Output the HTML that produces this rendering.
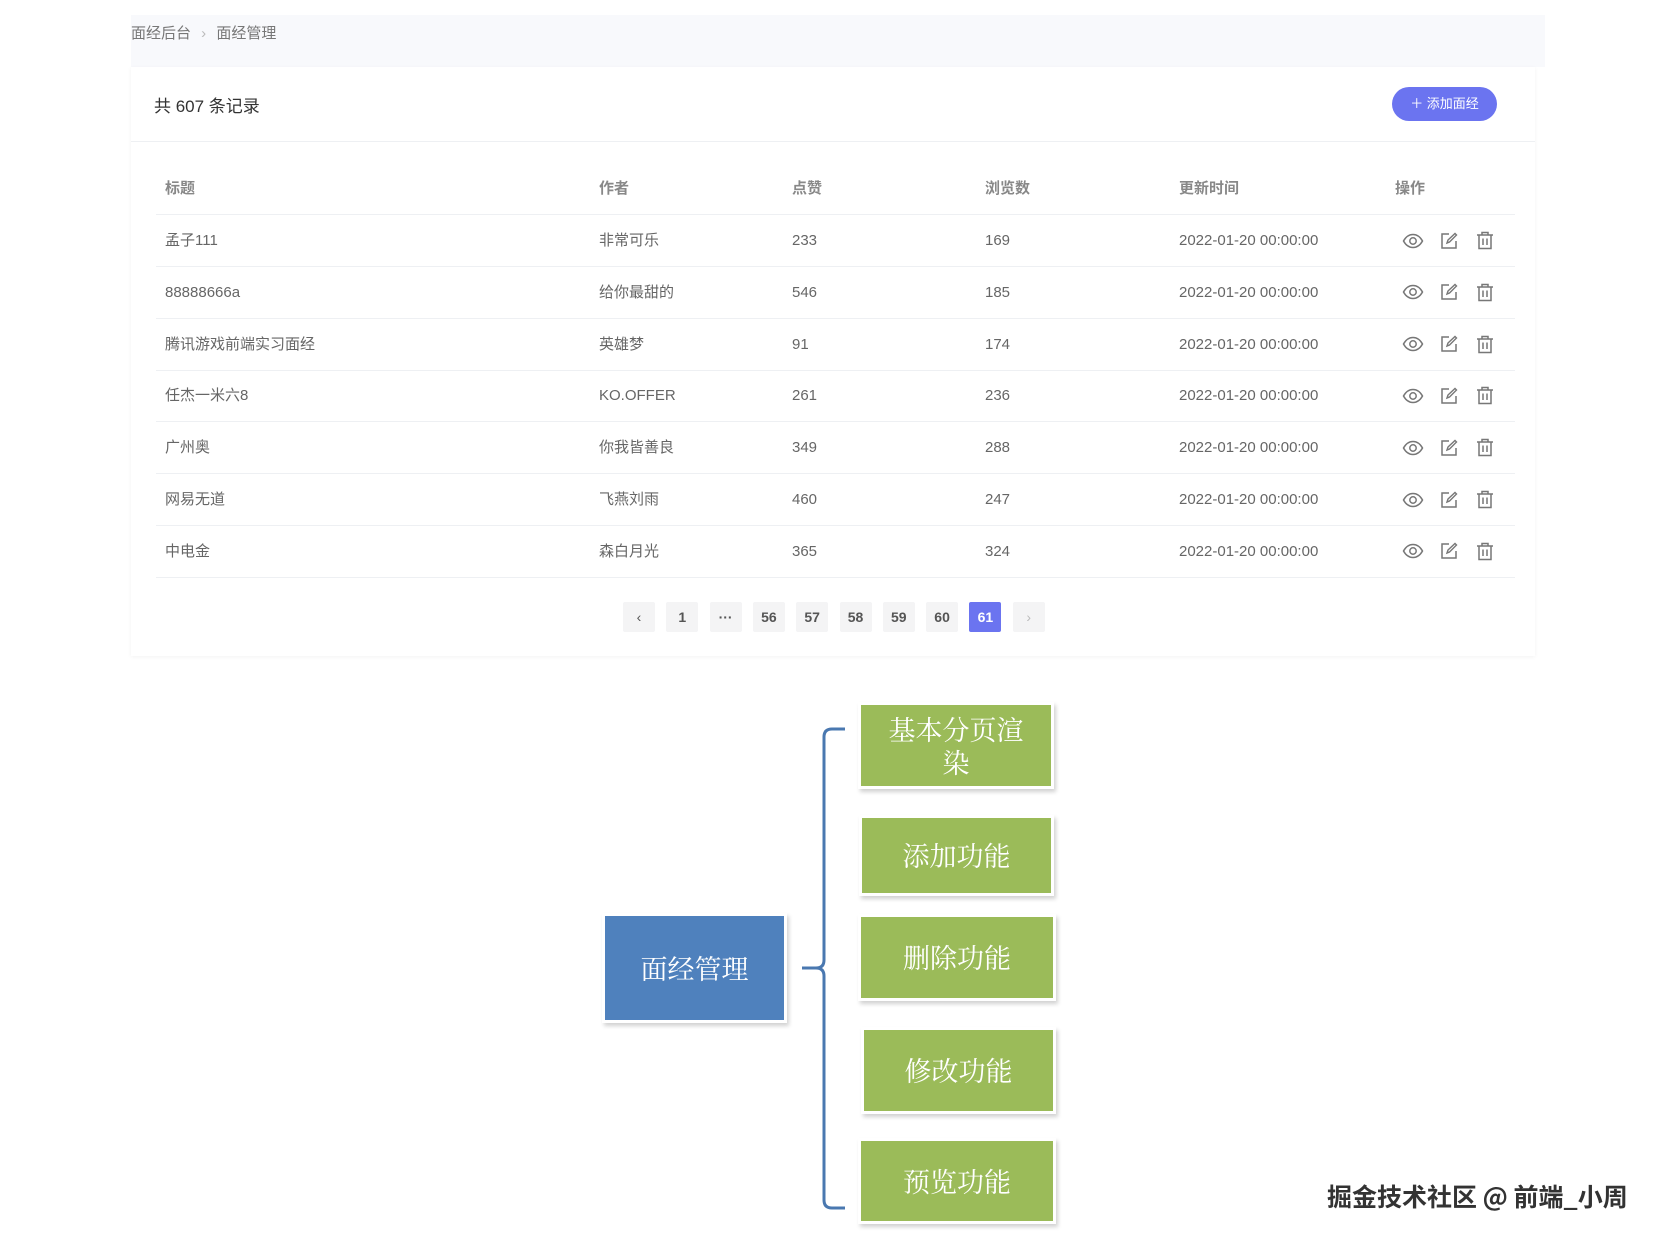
<!DOCTYPE html>
<html><head><meta charset="utf-8"><style>
*{margin:0;padding:0;box-sizing:border-box}
body{width:1656px;height:1241px;background:#fff;position:relative;overflow:hidden;font-family:"Liberation Sans","Noto Sans CJK SC",sans-serif;color:#555}
.abs{position:absolute}
.bc{left:131px;top:15px;width:1414px;height:52px;background:#f8f9fc;font-size:15px;color:#777;padding:7px 0 0 0}
.card{left:131px;top:67px;width:1404px;height:589px;background:#fff;box-shadow:0 1px 4px rgba(0,0,0,0.05)}
.hd{left:0;top:0;width:1404px;height:75px;border-bottom:1px solid #eef0f3}
.btn{left:1261px;top:20px;width:105px;height:34px;border-radius:17px;background:#6b74f0;color:#fff;font-size:13px;text-align:center;line-height:34px}
.row{position:absolute;left:25px;width:1359px;height:52px;border-bottom:1px solid #eef0f3;font-size:15px;color:#666}
.row span{position:absolute;top:0;height:51px;line-height:51px;display:flex;align-items:center}
.th span{font-weight:bold;color:#888}
.pg{position:absolute;top:535px;width:32px;height:30px;background:#f4f4f5;border-radius:2px;text-align:center;line-height:30px;font-size:14px;font-weight:bold;color:#555}
.gb{position:absolute;background:#9bbb59;color:#fff;font-family:"Noto Serif CJK SC",serif;font-size:27px;text-align:center;box-shadow:0 0 0 3px #fff,2px 3px 4px 3px rgba(0,0,0,0.18);display:flex;align-items:center;justify-content:center;line-height:1.2}
</style></head><body>
<div class="abs bc">面经后台 <span style="color:#bbb;margin:0 6px">›</span> 面经管理</div>
<div class="abs card">
 <div class="abs hd"><div class="abs" style="left:23px;top:25px;font-size:17px;color:#333">共 607 条记录</div><div class="abs btn">＋ 添加面经</div></div>
 <div class="abs" style="left:0;top:75px;width:1404px;height:514px">
 <div class="row th" style="top:21px"><span style="left:9px">标题</span><span style="left:443px">作者</span><span style="left:636px">点赞</span><span style="left:829px">浏览数</span><span style="left:1023px">更新时间</span><span style="left:1239px">操作</span></div>
 </div>
</div>
<div id="rows"></div>
<script>
var d=[["孟子111","非常可乐",233,169],["88888666a","给你最甜的",546,185],["腾讯游戏前端实习面经","英雄梦",91,174],["任杰一米六8","KO.OFFER",261,236],["广州奥","你我皆善良",349,288],["网易无道","飞燕刘雨",460,247],["中电金","森白月光",365,324]];
var eye='<svg width="22" height="16" viewBox="0 0 22 16"><path d="M1.5 8C4 3.5 7.5 1.5 11 1.5S18 3.5 20.5 8C18 12.5 14.5 14.5 11 14.5S4 12.5 1.5 8Z" fill="none" stroke="#777" stroke-width="1.5"/><circle cx="11" cy="8" r="3.2" fill="none" stroke="#777" stroke-width="1.5"/></svg>';
var ed='<svg width="18" height="18" viewBox="0 0 18 18"><path d="M9 2H2V16H16V9" fill="none" stroke="#777" stroke-width="1.5"/><path d="M7 11L8 8L15 1.5L16.5 3L9.5 10Z" fill="none" stroke="#777" stroke-width="1.4"/></svg>';
var tr='<svg width="18" height="19" viewBox="0 0 18 19"><path d="M1 4H17M6 4V1.5H12V4M3 4V17.5H15V4M7 7.5V14M11 7.5V14" fill="none" stroke="#777" stroke-width="1.5"/></svg>';
var h='';
d.forEach(function(r,i){var t=215+i*51.8;
h+='<div class="row" style="left:156px;top:'+t+'px"><span style="left:9px">'+r[0]+'</span><span style="left:443px">'+r[1]+'</span><span style="left:636px">'+r[2]+'</span><span style="left:829px">'+r[3]+'</span><span style="left:1023px">2022-01-20 00:00:00</span><span style="left:1246px">'+eye+'</span><span style="left:1284px">'+ed+'</span><span style="left:1320px">'+tr+'</span></div>';});
var p=['‹','1','···','56','57','58','59','60','61','›'];
p.forEach(function(s,i){var x=623+i*43.3;var st=i==8?'background:#6b74f0;color:#fff;':'';if(i==9)st='color:#bbb;font-weight:normal;';if(i==0)st='font-weight:normal;';
h+='<div class="pg" style="left:'+x+'px;top:602px;'+st+'">'+s+'</div>';});
document.getElementById('rows').innerHTML=h;
</script>
<div class="gb" style="left:605px;top:916px;width:179px;height:104px;background:#4f81bd">面经管理</div>
<div class="gb" style="left:861px;top:705px;width:190px;height:81px;padding:0 16px">基本分页渲染</div>
<div class="gb" style="left:862px;top:818px;width:189px;height:75px">添加功能</div>
<div class="gb" style="left:861px;top:917px;width:192px;height:81px">删除功能</div>
<div class="gb" style="left:864px;top:1030px;width:189px;height:81px">修改功能</div>
<div class="gb" style="left:861px;top:1141px;width:192px;height:80px">预览功能</div>
<svg class="abs" style="left:0;top:0" width="1656" height="1241"><path d="M845 729H832Q824 729 824 737V960Q824 968 816 968H802M816 968Q824 968 824 976V1200Q824 1208 832 1208H845" fill="none" stroke="#4a78b0" stroke-width="3"/></svg>
<div class="abs" style="left:1327px;top:1181px;font-size:25px;color:#333;font-family:'Noto Sans CJK SC',sans-serif;line-height:30px;font-weight:bold">掘金技术社区 @ 前端_小周</div>
</body></html>
